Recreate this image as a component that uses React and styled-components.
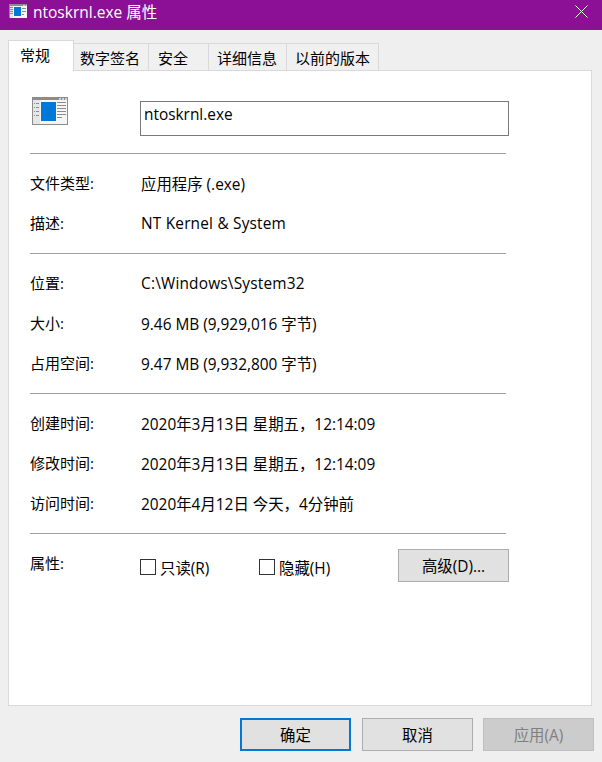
import React from "react";
import styled, { createGlobalStyle } from "styled-components";

const GlobalStyle = createGlobalStyle`
  html, body { margin: 0; padding: 0; background: #efefef; }
  * { box-sizing: border-box; }
  body {
    font-family: "Open Sans", "Noto Sans CJK SC", sans-serif;
    font-size: 15.4px;
    color: #000;
  }
`;

const Window = styled.div`
  width: 602px;
  height: 762px;
  display: flex;
  flex-direction: column;
  background: #efefef;
  overflow: hidden;
`;

const TitleBar = styled.div`
  height: 30px;
  flex: none;
  background: #8b1096;
  color: #fff;
  display: flex;
  align-items: center;
  padding: 0 14px 8px 9px;
  gap: 6px;
  font-size: 15.5px;
`;

const TitleText = styled.span`
  flex: 1;
`;

const Tabs = styled.div`
  display: flex;
  align-items: flex-end;
  height: 31px;
  margin: 10px 0 -1px 8px;
  position: relative;
  z-index: 1;
`;

const Tab = styled.div`
  width: ${(p) => p.$w}px;
  height: ${(p) => (p.$active ? 31 : 28)}px;
  background: ${(p) => (p.$active ? "#fff" : "#f0f0f0")};
  border: 1px solid #d9d9d9;
  border-left: ${(p) => (p.$first ? "1px solid #d9d9d9" : "none")};
  border-bottom: ${(p) => (p.$active ? "none" : "1px solid #d9d9d9")};
  display: flex;
  align-items: center;
  padding-left: ${(p) => p.$pad}px;
  padding-bottom: ${(p) => (p.$active ? 4 : 0)}px;
  font-size: 15px;
  white-space: nowrap;
`;

const Panel = styled.div`
  width: 584px;
  height: 636px;
  margin-left: 8px;
  flex: none;
  background: #fff;
  border: 1px solid #d9d9d9;
  padding: 26px 0 0 21px;
  display: flex;
  flex-direction: column;
`;

const NameRow = styled.div`
  display: flex;
  align-items: flex-start;
  height: 56px;
`;

const IconSlot = styled.div`
  width: 110px;
  padding: 0 0 0 2px;
`;

const NameField = styled.div`
  width: 369px;
  height: 35px;
  border: 1px solid #7a7a7a;
  margin-top: 4px;
  padding: 3px 3px;
  line-height: 20px;
`;

const Divider = styled.div`
  width: 476px;
  height: 1px;
  background: #a0a0a0;
  flex: none;
`;

const Group = styled.div`
  display: flex;
  flex-direction: column;
  padding: 10px 0 9px;
`;

const Row = styled.div`
  display: flex;
  align-items: center;
  height: 40px;
  padding-bottom: 1px;
`;

const Label = styled.div`
  width: 111px;
  flex: none;
  font-size: 15px;
  padding-bottom: 2px;
`;

const Value = styled.div`
  white-space: nowrap;
  letter-spacing: ${(p) => (p.$wide ? "0.2px" : "0")};
`;

const AttrRow = styled.div`
  display: flex;
  align-items: flex-start;
  padding-top: 15px;
`;

const AttrLabel = styled(Label)`
  width: 110px;
  line-height: 28px;
`;

const Check = styled.div`
  display: flex;
  align-items: center;
  width: ${(p) => p.$w}px;
  height: 20px;
  margin-top: 8px;
  gap: 4px;
  white-space: nowrap;
`;

const Box = styled.span`
  width: 16px;
  height: 16px;
  border: 1px solid #333;
  background: #fff;
  flex: none;
`;

const Button = styled.div`
  width: ${(p) => p.$w || 111}px;
  height: 33px;
  flex: none;
  display: flex;
  align-items: center;
  justify-content: center;
  background: ${(p) => (p.$disabled ? "#cccccc" : "#e1e1e1")};
  color: ${(p) => (p.$disabled ? "#7f7f7f" : "#000")};
  border: ${(p) =>
    p.$primary ? "2px solid #0078d7" : p.$disabled ? "1px solid #bfbfbf" : "1px solid #adadad"};
`;

const AdvancedButton = styled(Button)`
  margin-left: 28px;
`;

const Footer = styled.div`
  display: flex;
  justify-content: flex-end;
  gap: 10px;
  padding: 12px 8px 0 0;
`;

const OkButton = styled(Button)`
  margin-right: 1px;
`;

function AppIcon({ small }) {
  const size = small ? 18 : 36;
  return (
    <svg width={size} height={small ? 14 : 28} viewBox="0 0 36 28" shapeRendering="crispEdges">
      <rect width="36" height="28" fill="#8c8c8c" />
      <rect x="1" y="3" width="34" height="24" fill="#f5f5f5" />
      <rect x="1" y="3" width="7" height="24" fill="#e6e6e6" />
      <rect x="27" y="1" width="2" height="2" fill="#d0d0d0" />
      <rect x="30" y="1" width="2" height="2" fill="#d0d0d0" />
      <rect x="33" y="1" width="2" height="2" fill="#d0d0d0" />
      <rect x="9" y="5" width="15" height="19" fill="#0078d7" />
      {[6, 10, 14, 18].map((y) => (
        <g key={y}>
          <rect x="2" y={y} width="1" height="1" fill="#8c8c8c" />
          <rect x="4" y={y} width="3" height="1" fill="#8c8c8c" />
        </g>
      ))}
      {[5, 8, 11, 14, 17, 20].map((y, i) => (
        <rect key={y} x="25" y={y} width={i === 5 ? 5 : 9} height="1" fill="#8c8c8c" />
      ))}
    </svg>
  );
}

function CloseIcon() {
  return (
    <svg width="13" height="13" viewBox="0 0 13 13">
      <path d="M0.5 0.5 L12.5 12.5 M12.5 0.5 L0.5 12.5" stroke="#fff" strokeWidth="1" fill="none" />
    </svg>
  );
}

const tabs = [
  { name: "常规", w: 66, pad: 11, active: true, first: true },
  { name: "数字签名", w: 75, pad: 6 },
  { name: "安全", w: 60, pad: 9 },
  { name: "详细信息", w: 78, pad: 8 },
  { name: "以前的版本", w: 92, pad: 8 },
];

const groups = [
  [
    { label: "文件类型:", value: "应用程序 (.exe)" },
    { label: "描述:", value: "NT Kernel & System", wide: true },
  ],
  [
    { label: "位置:", value: "C:\\Windows\\System32", wide: true },
    { label: "大小:", value: "9.46 MB (9,929,016 字节)" },
    { label: "占用空间:", value: "9.47 MB (9,932,800 字节)" },
  ],
  [
    { label: "创建时间:", value: "2020年3月13日 星期五，12:14:09" },
    { label: "修改时间:", value: "2020年3月13日 星期五，12:14:09" },
    { label: "访问时间:", value: "2020年4月12日 今天，4分钟前" },
  ],
];

export default function App() {
  return (
    <Window>
      <GlobalStyle />
      <TitleBar>
        <AppIcon small />
        <TitleText>ntoskrnl.exe 属性</TitleText>
        <CloseIcon />
      </TitleBar>
      <Tabs>
        {tabs.map((t) => (
          <Tab key={t.name} $w={t.w} $pad={t.pad} $active={t.active} $first={t.first}>
            {t.name}
          </Tab>
        ))}
      </Tabs>
      <Panel>
        <NameRow>
          <IconSlot>
            <AppIcon />
          </IconSlot>
          <NameField>ntoskrnl.exe</NameField>
        </NameRow>
        {groups.map((rows, i) => (
          <React.Fragment key={i}>
            <Divider />
            <Group>
              {rows.map((r) => (
                <Row key={r.label}>
                  <Label>{r.label}</Label>
                  <Value $wide={r.wide}>{r.value}</Value>
                </Row>
              ))}
            </Group>
          </React.Fragment>
        ))}
        <Divider />
        <AttrRow>
          <AttrLabel>属性:</AttrLabel>
          <Check $w={119}>
            <Box />
            只读(R)
          </Check>
          <Check $w={111}>
            <Box />
            隐藏(H)
          </Check>
          <AdvancedButton>高级(D)...</AdvancedButton>
        </AttrRow>
      </Panel>
      <Footer>
        <OkButton $primary>确定</OkButton>
        <Button>取消</Button>
        <Button $disabled>应用(A)</Button>
      </Footer>
    </Window>
  );
}
